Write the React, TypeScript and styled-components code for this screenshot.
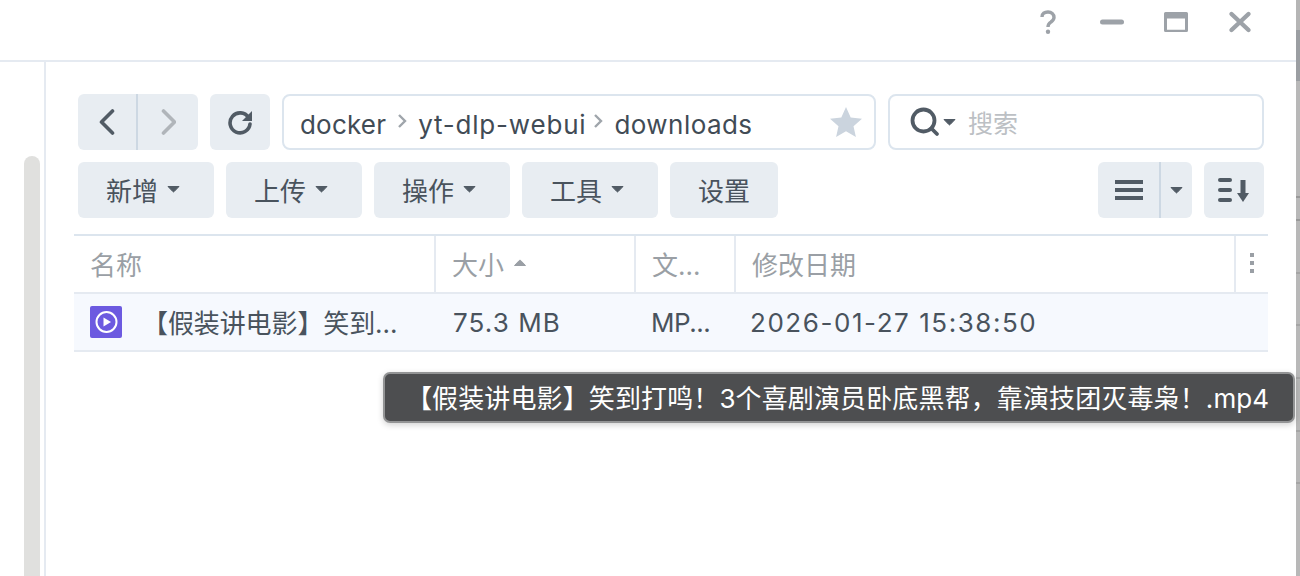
import React from "react";
import styled, { createGlobalStyle } from "styled-components";

const Global = createGlobalStyle`
  html, body { margin: 0; padding: 0; background: #fff; }
  body { width: 1300px; height: 576px; overflow: hidden; font-family: Inter, "Noto Sans CJK SC", sans-serif; }
  * { box-sizing: border-box; }
`;

const Page = styled.div`
  position: relative; width: 1300px; height: 576px; display: flex; background: #fff; overflow: hidden;
`;
const Strip = styled.div`
  width: 4px; flex: none;
  background: linear-gradient(to bottom,
    #b5b5b5 0, #b5b5b5 30px, #9b9ea2 30px, #9b9ea2 81px, #b8b8b8 81px,
    #b8b8b8 196px, #999 196px, #999 198px, #b8b8b8 198px,
    #b8b8b8 219px, #999 219px, #999 221px, #b8b8b8 221px,
    #b8b8b8 272px, #a5a5a5 272px, #a5a5a5 274px, #b8b8b8 274px,
    #b8b8b8 324px, #a5a5a5 324px, #a5a5a5 326px, #b8b8b8 326px,
    #b8b8b8 377px, #a5a5a5 377px, #a5a5a5 379px, #b8b8b8 379px,
    #b8b8b8 430px, #a5a5a5 430px, #a5a5a5 432px, #b8b8b8 432px,
    #b8b8b8 482px, #a5a5a5 482px, #a5a5a5 484px, #b8b8b8 484px, #b8b8b8 100%);
`;
const Win = styled.div`
  width: 1296px; display: flex; flex-direction: column; flex: none;
`;
const TitleBar = styled.div`
  height: 62px; flex: none; border-bottom: 2px solid #e5eaf1; display: flex; align-items: flex-start; justify-content: flex-end; padding: 10px 0 0 0;
`;
const TitleBtn = styled.div<{ $mr: number }>`
  width: 24px; height: 24px; display: flex; align-items: center; justify-content: center; margin-right: ${(p) => p.$mr}px;
`;
const Body = styled.div`
  flex: 1; display: flex; min-height: 0;
`;
const Side = styled.div`
  width: 46px; flex: none; border-right: 2px solid #e5eaf1; padding: 94px 0 0 24px;
`;
const Thumb = styled.div`
  width: 16px; height: 500px; background: #e0e0de; border-radius: 8px 8px 0 0;
`;
const Main = styled.div`
  flex: 1; padding: 32px 32px 0 28px; min-width: 0;
`;
const Row = styled.div`
  display: flex; gap: 12px; height: 56px; margin-left: 4px;
`;
const BtnGroup = styled.div`
  display: flex; background: #e8edf2; border-radius: 6px; height: 56px;
`;
const NavCell = styled.div<{ $w: number; $sep?: boolean }>`
  width: ${(p) => p.$w}px; height: 56px; display: flex; align-items: center; justify-content: center;
  ${(p) => (p.$sep ? "border-left: 2px solid #cdd8e3;" : "")}
`;
const PathBox = styled.div`
  width: 594px; height: 56px; border: 2px solid #dce5ee; border-radius: 8px; display: flex; align-items: center;
  padding: 4px 12px 0 16px; font-size: 26px; color: #414b55;
`;
const Crumb = styled.span<{ $ls: number }>`
  white-space: nowrap; letter-spacing: ${(p) => p.$ls}px;
`;
const CrumbSep = styled.svg<{ $ml: number }>`
  width: 10px; height: 16px; margin: 0 11px 7px ${(p) => p.$ml}px; flex: none;
`;
const StarWrap = styled.div`
  margin-left: auto; margin-top: -4px; display: flex;
`;
const SearchBox = styled.div`
  width: 376px; height: 56px; border: 2px solid #dce5ee; border-radius: 8px; display: flex; align-items: center; padding-left: 20px;
`;
const SearchGap = styled.span`
  width: 3px;
`;
const SearchHint = styled.span`
  font-size: 25px; color: #bcc0c4; margin-left: 12px;
`;
const Row2 = styled(Row)`
  margin-top: 12px;
`;
const TextBtn = styled.div<{ $w: number; $menu?: boolean }>`
  width: ${(p) => p.$w}px; height: 56px; background: #e8edf2; border-radius: 6px; display: flex; align-items: center; justify-content: center;
  font-size: 26px; color: #49535d; gap: 9px; padding-bottom: 2px;
  ${(p) => (p.$menu ? "padding-right: 6px;" : "")}
`;
const Spacer = styled.div`
  flex: 1;
`;
const Caret = styled.svg`
  width: 13px; height: 8px; flex: none;
`;
const Table = styled.div`
  margin-top: 16px; width: 1194px; border-top: 2px solid #dce5ee;
`;
const HeadRow = styled.div`
  display: flex; height: 58px; border-bottom: 2px solid #e5eaf1;
`;
const HeadCell = styled.div<{ $w: number; $last?: boolean }>`
  width: ${(p) => p.$w}px; flex: none; display: flex; align-items: center; padding: 0 0 2px ${(p) => (p.$last ? 14 : 16)}px;
  font-size: 26px; color: #9a9fa5; gap: 9px; white-space: nowrap;
  ${(p) => (p.$last ? "" : "border-right: 2px solid #e5eaf1;")}
`;
const DataRow = styled.div`
  display: flex; height: 58px; background: #f6f9fe; border-bottom: 2px solid #e5eaf1; align-items: center;
  font-size: 26px; color: #49535d;
`;
const NameCell = styled.div`
  width: 362px; flex: none; display: flex; align-items: center; padding-left: 16px;
`;
const FileName = styled.span`
  font-size: 26px; margin-left: 20px; white-space: nowrap; margin-top: -1px; letter-spacing: -0.1px;
`;
const DataCell = styled.div<{ $w: number; $pl: number; $ls: number }>`
  width: ${(p) => p.$w}px; flex: none; padding-left: ${(p) => p.$pl}px; white-space: nowrap; letter-spacing: ${(p) => p.$ls}px;
`;
const Tip = styled.div`
  position: absolute; left: 383px; top: 372px; width: 912px; height: 51px; border-radius: 7px; background: #4d4e50;
  border: 2px solid #939495; box-shadow: 0 2px 6px rgba(0,0,0,.18); color: #fff; font-size: 26px; letter-spacing: 0.12px;
  display: flex; align-items: center; padding: 0 0 2px 21px; white-space: nowrap;
`;

const DownCaret = () => (
  <Caret viewBox="0 0 13 8"><path d="M1 1.500h11L7.100 6.600a.8.8 0 0 1-1.200 0z" fill="#515b65" stroke="#515b65" strokeWidth="1" strokeLinejoin="round" /></Caret>
);

export default function App() {
  return (
    <Page>
      <Global />
      <Win>
        <TitleBar>
          <TitleBtn $mr={40}>
            <svg width="16" height="24" viewBox="0 0 16 24"><path d="M2 7C2 3.500 4.500 2 8 2s6 2 6 5.500c0 2.500-1.600 3.500-3.200 4.600C9 13.200 8 14 8 17" fill="none" stroke="#9da2a8" strokeWidth="3.400" /><circle cx="8" cy="21.800" r="2.200" fill="#9da2a8" /></svg>
          </TitleBtn>
          <TitleBtn $mr={40}>
            <svg width="24" height="24" viewBox="0 0 24 24"><rect x="0" y="9.500" width="24" height="5" rx="2.500" fill="#9da2a8" /></svg>
          </TitleBtn>
          <TitleBtn $mr={40}>
            <svg width="24" height="24" viewBox="0 0 24 24"><path fillRule="evenodd" d="M1.500 2H22.500A1.500 1.500 0 0 1 24 3.500V20.500A1.500 1.500 0 0 1 22.500 22H1.500A1.500 1.500 0 0 1 0 20.500V3.500A1.500 1.500 0 0 1 1.500 2ZM3 8.500V19.800H21V8.500Z" fill="#9da2a8" /></svg>
          </TitleBtn>
          <TitleBtn $mr={44}>
            <svg width="24" height="24" viewBox="0 0 24 24"><path d="M3.500 4 20.500 20M20.500 4 3.500 20" stroke="#9da2a8" strokeWidth="4.400" strokeLinecap="round" /></svg>
          </TitleBtn>
        </TitleBar>
        <Body>
          <Side><Thumb /></Side>
          <Main>
            <Row>
              <BtnGroup>
                <NavCell $w={58}>
                  <svg width="16" height="26" viewBox="0 0 16 26"><path d="M13.500 2 2.500 13l11 11" fill="none" stroke="#515b65" strokeWidth="3.600" strokeLinecap="round" strokeLinejoin="round" /></svg>
                </NavCell>
                <NavCell $w={62} $sep>
                  <svg width="16" height="26" viewBox="0 0 16 26"><path d="M3.500 2l11 11-11 11" fill="none" stroke="#b0b5ba" strokeWidth="3.600" strokeLinecap="round" strokeLinejoin="round" /></svg>
                </NavCell>
              </BtnGroup>
              <BtnGroup>
                <NavCell $w={60}>
                  <svg width="26" height="26" viewBox="0 0 26 26"><path d="M21.500 8.500A10 10 0 1 0 23 15" fill="none" stroke="#515b65" strokeWidth="3.600" strokeLinecap="round" /><path d="M25 2v10H15z" fill="#515b65" /></svg>
                </NavCell>
              </BtnGroup>
              <PathBox>
                <Crumb $ls={0.2}>docker</Crumb>
                <CrumbSep $ml={11} viewBox="0 0 10 16"><path d="M2 2l6 6-6 6" fill="none" stroke="#9fa5ab" strokeWidth="2.400" /></CrumbSep>
                <Crumb $ls={0.8}>yt-dlp-webui</Crumb>
                <CrumbSep $ml={7} viewBox="0 0 10 16"><path d="M2 2l6 6-6 6" fill="none" stroke="#9fa5ab" strokeWidth="2.400" /></CrumbSep>
                <Crumb $ls={0.45}>downloads</Crumb>
                <StarWrap>
                  <svg width="32" height="30" viewBox="0 0 32 30"><path d="M16 0l4.700 10.500L32 11.700l-8.500 7.600L25.900 30 16 24.300 6.100 30l2.400-10.700L0 11.700l11.300-1.200z" fill="#cbd4de" /></svg>
                </StarWrap>
              </PathBox>
              <SearchBox>
                <svg width="30" height="30" viewBox="0 0 30 30"><circle cx="13.500" cy="13.500" r="11" fill="none" stroke="#515b65" strokeWidth="3.800" /><path d="M21.500 21.500 27 27" stroke="#515b65" strokeWidth="3.800" strokeLinecap="round" /></svg>
                <SearchGap />
                <DownCaret />
                <SearchHint>搜索</SearchHint>
              </SearchBox>
            </Row>
            <Row2>
              <TextBtn $w={136} $menu>新增<DownCaret /></TextBtn>
              <TextBtn $w={136} $menu>上传<DownCaret /></TextBtn>
              <TextBtn $w={136} $menu>操作<DownCaret /></TextBtn>
              <TextBtn $w={136} $menu>工具<DownCaret /></TextBtn>
              <TextBtn $w={108}>设置</TextBtn>
              <Spacer />
              <BtnGroup>
                <NavCell $w={61}>
                  <svg width="28" height="20" viewBox="0 0 28 20"><path d="M0 0h28v4H0zM0 8h28v4H0zM0 16h28v4H0z" fill="#515b65" /></svg>
                </NavCell>
                <NavCell $w={33} $sep><DownCaret /></NavCell>
              </BtnGroup>
              <BtnGroup>
                <NavCell $w={60}>
                  <svg width="32" height="24" viewBox="0 0 32 24"><g fill="#515b65"><rect x="0" y="0" width="14" height="4" rx="2" /><rect x="0" y="10" width="14" height="4" rx="2" /><rect x="0" y="20" width="14" height="4" rx="2" /><rect x="22.500" y="2" width="5" height="16" /><path d="M19 15h12l-6 9z" /></g></svg>
                </NavCell>
              </BtnGroup>
            </Row2>
            <Table>
              <HeadRow>
                <HeadCell $w={362}>名称</HeadCell>
                <HeadCell $w={200}>大小<svg width="14" height="8" viewBox="0 0 14 8"><path d="M1.500 6.500h11L7.600 1.400a.8.8 0 0 0-1.200 0z" fill="#9a9fa5" stroke="#9a9fa5" /></svg></HeadCell>
                <HeadCell $w={100}>文...</HeadCell>
                <HeadCell $w={500}>修改日期</HeadCell>
                <HeadCell $w={32} $last>
                  <svg width="4" height="20" viewBox="0 0 4 20"><path d="M0 0h4v4H0zM0 8h4v4H0zM0 16h4v4H0z" fill="#9a9fa5" /></svg>
                </HeadCell>
              </HeadRow>
              <DataRow>
                <NameCell>
                  <svg width="32" height="32" viewBox="0 0 32 32"><rect width="32" height="32" rx="2" fill="#6c5ae0" /><circle cx="16.500" cy="16" r="10" fill="none" stroke="#fff" strokeWidth="2" /><path d="M13.500 11.500 21 16l-7.500 4.500z" fill="#fff" /></svg>
                  <FileName>【假装讲电影】笑到...</FileName>
                </NameCell>
                <DataCell $w={200} $pl={17} $ls={1.1}>75.3 MB</DataCell>
                <DataCell $w={100} $pl={15} $ls={-0.5}>MP...</DataCell>
                <DataCell $w={500} $pl={14} $ls={1.55}>2026-01-27 15:38:50</DataCell>
              </DataRow>
            </Table>
          </Main>
        </Body>
      </Win>
      <Strip />
      <Tip>【假装讲电影】笑到打鸣！3个喜剧演员卧底黑帮，靠演技团灭毒枭！.mp4</Tip>
    </Page>
  );
}
